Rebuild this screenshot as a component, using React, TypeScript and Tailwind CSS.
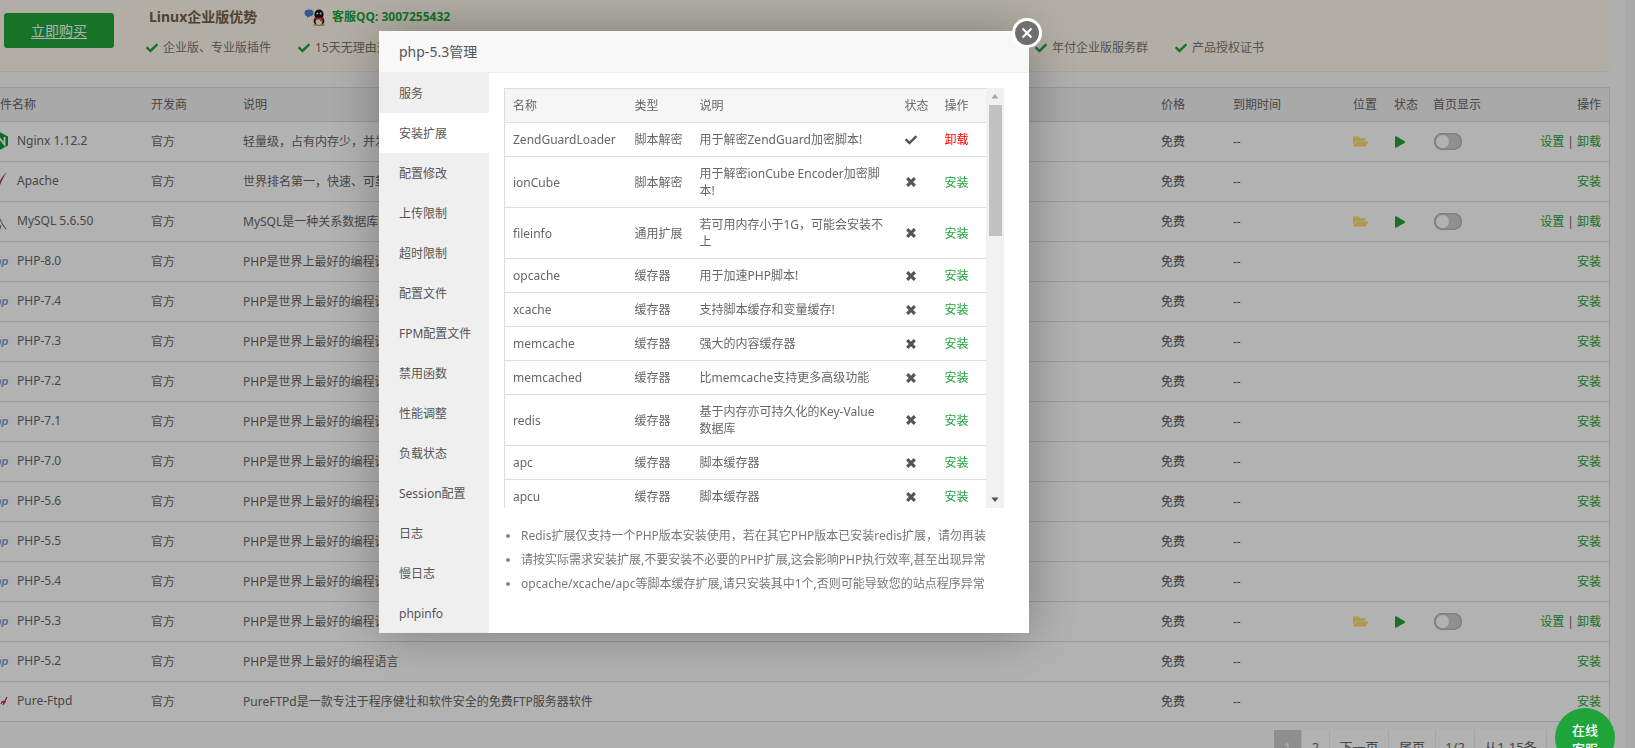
import React from "react";
import { FaCheck, FaFolderOpen, FaPlay } from "react-icons/fa";

const NginxIcon = () => (
  <svg viewBox="0 0 20 20" className="w-5 h-5 shrink-0">
    <path d="M10.5 0.5 L20 5.5 V14.5 L10.5 19.5 L1 14.5 V5.5 Z" fill="#0a9a3a" />
    <path d="M11 14 V6.5 L16.5 13.5 V6" fill="none" stroke="#fff" strokeWidth="1.8" />
  </svg>
);
const ApacheIcon = () => (
  <svg viewBox="0 0 20 20" className="w-5 h-5 shrink-0">
    <path d="M19 1 C16 5 14 9 12 14 L10.5 12.5 C13 8 15 4 19 1 Z" fill="#b8325a" />
    <path d="M12.5 12 L11 18 L10 12 Z" fill="#9a3a70" />
  </svg>
);
const MysqlIcon = () => (
  <svg viewBox="0 0 20 20" className="w-5 h-5 shrink-0">
    <path d="M3 2 C7 3 10 4 12 8 C13 11 14 14 18 18 M13 14 L12 18" fill="none" stroke="#5f8299" strokeWidth="1.1" />
  </svg>
);
const PhpIcon = () => (
  <span className="w-5 shrink-0 text-[11px] leading-5 font-bold italic text-[#7f9ccf] font-['Liberation_Sans',sans-serif] text-right">
    php
  </span>
);
const PureIcon = () => (
  <span className="w-5 shrink-0 flex items-center justify-end">
    <span className="text-[10px] leading-5 font-bold text-[#777] font-['Liberation_Sans',sans-serif]">P</span>
    <svg viewBox="0 0 8 10" className="w-2 h-2.5">
      <path d="M1 8 C3 4 5 5 4 8 M7 1 L3 9 M1 6 L6 6" fill="none" stroke="#c9242c" strokeWidth="1.2" />
    </svg>
  </span>
);

const QQIcon = () => (
  <svg viewBox="0 0 24 17" className="w-6 h-[17px] shrink-0">
    <ellipse cx="5" cy="4" rx="4.5" ry="3.4" fill="#4f7fc9" />
    <path d="M3 6.5 L3 9 L6 7 Z" fill="#4f7fc9" />
    <ellipse cx="15" cy="5.5" rx="4.6" ry="5" fill="#161616" />
    <ellipse cx="15" cy="12" rx="5.4" ry="4.6" fill="#161616" />
    <ellipse cx="15" cy="12.5" rx="3.4" ry="3.6" fill="#f4f4f4" />
    <circle cx="13.4" cy="4.4" r="1" fill="#fff" />
    <circle cx="16.6" cy="4.4" r="1" fill="#fff" />
    <path d="M10.5 8.5 H19.5 L20 10.5 H10 Z M17 10 L18.5 13 L16 12 Z" fill="#d52a1e" />
    <ellipse cx="11.5" cy="16" rx="2.4" ry="1" fill="#e8a21c" />
    <ellipse cx="18.5" cy="16" rx="2.4" ry="1" fill="#e8a21c" />
  </svg>
);

const Remove = () => (
  <svg viewBox="0 0 12 12" className="h-3 w-3">
    <path d="M2.2 2.2 L9.8 9.8 M9.8 2.2 L2.2 9.8" fill="none" stroke="#555" strokeWidth="3.2" />
  </svg>
);

const Tick = () => <FaCheck className="w-3 h-3 text-[#20a53a] shrink-0" />;

const perks: [string, string][] = [
  ["企业版、专业版插件", "w-[152px]"],
  ["15天无理由退款", "w-[184px]"],
  ["可购买商业防火墙", "w-[184px]"],
  ["1000条免费短信", "w-[184px]"],
  ["专享企业运维群", "w-[185px]"],
  ["年付企业版服务群", "w-[140px]"],
  ["产品授权证书", "w-[110px]"],
];

type Row = { icon: React.ReactNode; name: string; desc: string; on?: boolean };
const phpDesc = "PHP是世界上最好的编程语言";
const rows: Row[] = [
  { icon: <NginxIcon />, name: "Nginx 1.12.2", desc: "轻量级，占有内存少，并发能力强", on: true },
  { icon: <ApacheIcon />, name: "Apache", desc: "世界排名第一，快速、可靠并且可通过简单的API扩充" },
  { icon: <MysqlIcon />, name: "MySQL 5.6.50", desc: "MySQL是一种关系数据库管理系统", on: true },
  { icon: <PhpIcon />, name: "PHP-8.0", desc: phpDesc },
  { icon: <PhpIcon />, name: "PHP-7.4", desc: phpDesc },
  { icon: <PhpIcon />, name: "PHP-7.3", desc: phpDesc },
  { icon: <PhpIcon />, name: "PHP-7.2", desc: phpDesc },
  { icon: <PhpIcon />, name: "PHP-7.1", desc: phpDesc },
  { icon: <PhpIcon />, name: "PHP-7.0", desc: phpDesc },
  { icon: <PhpIcon />, name: "PHP-5.6", desc: phpDesc },
  { icon: <PhpIcon />, name: "PHP-5.5", desc: phpDesc },
  { icon: <PhpIcon />, name: "PHP-5.4", desc: phpDesc },
  { icon: <PhpIcon />, name: "PHP-5.3", desc: phpDesc, on: true },
  { icon: <PhpIcon />, name: "PHP-5.2", desc: phpDesc },
  { icon: <PureIcon />, name: "Pure-Ftpd", desc: "PureFTPd是一款专注于程序健壮和软件安全的免费FTP服务器软件" },
];

const gridCols = "grid grid-cols-[163px_92px_918px_72px_120px_41px_39px_99px_1fr] items-center";

const menu = ["服务", "安装扩展", "配置修改", "上传限制", "超时限制", "配置文件", "FPM配置文件", "禁用函数", "性能调整", "负载状态", "Session配置", "日志", "慢日志", "phpinfo"];

const exts: [string, string, string, boolean][] = [
  ["ZendGuardLoader", "脚本解密", "用于解密ZendGuard加密脚本!", true],
  ["ionCube", "脚本解密", "用于解密ionCube Encoder加密脚本!", false],
  ["fileinfo", "通用扩展", "若可用内存小于1G，可能会安装不上", false],
  ["opcache", "缓存器", "用于加速PHP脚本!", false],
  ["xcache", "缓存器", "支持脚本缓存和变量缓存!", false],
  ["memcache", "缓存器", "强大的内容缓存器", false],
  ["memcached", "缓存器", "比memcache支持更多高级功能", false],
  ["redis", "缓存器", "基于内存亦可持久化的Key-Value数据库", false],
  ["apc", "缓存器", "脚本缓存器", false],
  ["apcu", "缓存器", "脚本缓存器", false],
  ["imagemagick", "通用扩展", "强大的图像处理扩展", false],
];

const pages: [string, string][] = [
  ["1", "w-[28px] bg-[#cccccc] text-white"],
  ["2", "w-[28px] bg-white"],
  ["下一页", "w-[59px] bg-white"],
  ["尾页", "w-[47px] bg-white"],
  ["1/2", "w-[39px] bg-white"],
  ["从1-15条", "w-[72px] bg-white"],
];

export default function App() {
  return (
    <div className="relative h-[748px] w-[1635px] overflow-hidden bg-[#fbfbfb] text-xs text-[#666] font-['Noto_Sans','Noto_Sans_CJK_SC',sans-serif]">
      <div className="flex h-full">
        <main className="ml-[-21px] w-[1631px] shrink-0">
          <section className="flex h-[72px] border-b border-[#f0ead8] rounded-br bg-[#fffaee]">
            <div className="ml-[25px] mt-[13px] h-[35px] w-[110px] rounded-[3px] bg-[#20a53a] text-center text-sm leading-[35px] text-white underline underline-offset-2">
              立即购买
            </div>
            <div className="ml-[35px] flex-1">
              <div className="flex h-[33px] items-center pt-[1px]">
                <h3 className="w-[155px] text-sm font-bold text-[#75604a]">Linux企业版优势</h3>
                <QQIcon />
                <span className="ml-[4px] font-bold text-[#20a53a]">客服QQ: 3007255432</span>
              </div>
              <ul className="ml-[-3px] flex h-[30px] items-center">
                {perks.map(([t, w]) => (
                  <li key={t} className={`flex items-center gap-[5px] ${w}`}>
                    <Tick />
                    <span className="whitespace-nowrap text-[#777]">{t}</span>
                  </li>
                ))}
              </ul>
            </div>
          </section>

          <section className="mt-[15px] border border-b-0 border-[#dddddd] bg-white">
            <div className={`${gridCols} h-[34px] border-b border-[#dddddd] bg-[#f2f2f2]`}>
              {["软件名称", "开发商", "说明", "价格", "到期时间", "位置", "状态", "首页显示"].map((h) => (
                <div key={h} className="px-2 whitespace-nowrap">{h}</div>
              ))}
              <div className="px-2 text-right">操作</div>
            </div>
            {rows.map((r) => (
              <div key={r.name} className={`${gridCols} h-10 border-b border-[#dddddd]`}>
                <div className="flex items-center gap-[9px] px-2 pb-[2px]">
                  {r.icon}
                  <span className="whitespace-nowrap">{r.name}</span>
                </div>
                <div className="px-2">官方</div>
                <div className="px-2 whitespace-nowrap">{r.desc}</div>
                <div className="px-2 text-[#555]">免费</div>
                <div className="px-2 text-[#555]">--</div>
                <div className="px-2">{r.on && <FaFolderOpen className="w-[15px] h-[15px] text-[#fcdc6b]" />}</div>
                <div className="pl-[9px] pr-2">{r.on && <FaPlay className="w-[10px] h-[12px] text-[#20a53a]" />}</div>
                <div className="pl-[9px] pr-2">
                  {r.on && (
                    <div className="flex h-[17px] w-[28px] items-center rounded-full bg-[#cfcfcf] px-[2px] shadow-[inset_0_0_2px_rgba(0,0,0,0.5)]">
                      <div className="h-[13px] w-[13px] rounded-full bg-white" />
                    </div>
                  )}
                </div>
                <div className="px-2 text-right text-[#20a53a]">
                  {r.on ? (
                    <>
                      设置<span className="mx-[3px] text-[#666]">|</span>卸载
                    </>
                  ) : (
                    "安装"
                  )}
                </div>
              </div>
            ))}
          </section>

          <nav className="mt-2 flex justify-end pr-[13px]">
            <div className="flex">
              {pages.map(([t, c]) => (
                <span key={t} className={`h-[34px] border-r border-[#eeeeee] text-center text-[13px] leading-[34px] ${c}`}>
                  {t}
                </span>
              ))}
              <span className="h-[34px] w-[50px] bg-white" />
            </div>
          </nav>
        </main>
        <div className="ml-[15px] h-full flex-1 bg-[#f1f1f1]" />
      </div>

      <div className="fixed inset-0 bg-black/30" />

      <div className="fixed left-[379px] top-[31px] flex h-[602px] w-[650px] flex-col bg-white shadow-[1px_1px_50px_rgba(0,0,0,0.3)]">
        <header className="h-[42px] shrink-0 border-b border-[#eeeeee] bg-[#f8f8f8] pl-5 text-sm leading-[41px] text-[#555]">
          php-5.3管理
        </header>
        <div className="flex min-h-0 flex-1">
          <ul className="w-[110px] shrink-0 bg-[#efefef]">
            {menu.map((m) => (
              <li key={m} className={`h-10 pl-5 leading-[41px] text-[#555] ${m === "安装扩展" ? "bg-white" : ""}`}>
                {m}
              </li>
            ))}
          </ul>
          <div className="flex-1 pl-[15px] pt-[15px]">
            <div className="flex h-[420px] w-[500px]">
              <div className="h-full w-[482px] overflow-hidden">
                <table className="w-[482px] table-fixed border-collapse leading-[17px]">
                  <colgroup>
                    <col className="w-[122px]" />
                    <col className="w-[65px]" />
                    <col className="w-[205px]" />
                    <col className="w-[40px]" />
                    <col className="w-[50px]" />
                  </colgroup>
                  <thead>
                    <tr className="bg-[#f6f6f6]">
                      {["名称", "类型", "说明", "状态", "操作"].map((h) => (
                        <th key={h} className="border-y border-[#dddddd] px-2 py-2 text-left font-normal first:border-l last:border-r">{h}</th>
                      ))}
                    </tr>
                  </thead>
                  <tbody>
                    {exts.map(([n, t, d, ok]) => (
                      <tr key={n}>
                        <td className="border-b border-l border-[#dddddd] px-2 py-2 whitespace-nowrap">{n}</td>
                        <td className="border-b border-[#dddddd] px-2 py-2">{t}</td>
                        <td className="border-b border-[#dddddd] py-2 pl-2 pr-[12px]">{d}</td>
                        <td className="border-b border-[#dddddd] px-2 py-2 text-[#555]">
                          {ok ? <FaCheck className="h-3 w-3" /> : <Remove />}
                        </td>
                        <td className={`border-b border-r border-[#dddddd] px-2 py-2 ${ok ? "text-[#ff0000]" : "text-[#20a53a]"}`}>
                          {ok ? "卸载" : "安装"}
                        </td>
                      </tr>
                    ))}
                  </tbody>
                </table>
              </div>
              <div className="flex h-full w-[18px] flex-col items-center bg-[#f1f1f1]">
                <svg viewBox="0 0 18 17" className="h-[17px] w-[18px] shrink-0"><path d="M9 6 L12.5 10.5 H5.5 Z" fill="#a3a3a3" /></svg>
                <div className="h-[131px] w-[13px] bg-[#c1c1c1]" />
                <div className="flex-1" />
                <svg viewBox="0 0 18 17" className="h-[17px] w-[18px] shrink-0"><path d="M9 11 L12.5 6.5 H5.5 Z" fill="#505050" /></svg>
              </div>
            </div>
            <ul className="mt-4 list-disc pl-[17px] leading-6 text-[#777] marker:text-[#888]">
              <li className="whitespace-nowrap">Redis扩展仅支持一个PHP版本安装使用，若在其它PHP版本已安装redis扩展，请勿再装</li>
              <li className="whitespace-nowrap">请按实际需求安装扩展,不要安装不必要的PHP扩展,这会影响PHP执行效率,甚至出现异常</li>
              <li className="whitespace-nowrap">opcache/xcache/apc等脚本缓存扩展,请只安装其中1个,否则可能导致您的站点程序异常</li>
            </ul>
          </div>
        </div>
        <button className="absolute right-[-13px] top-[-13px] flex h-[30px] w-[30px] items-center justify-center rounded-full border-[3px] border-white bg-[#6f6f6f]">
          <svg viewBox="0 0 12 12" className="h-[14px] w-[14px]"><path d="M2.2 2.2 L9.8 9.8 M9.8 2.2 L2.2 9.8" stroke="#fff" strokeWidth="1.8" /></svg>
        </button>
      </div>

      <div className="fixed left-[1555px] top-[708px] flex h-[60px] w-[60px] flex-col items-center rounded-full bg-[#20a53a] pt-[13px] text-[13px] font-medium leading-[19px] text-white">
        <span>在线</span>
        <span>客服</span>
      </div>
    </div>
  );
}
